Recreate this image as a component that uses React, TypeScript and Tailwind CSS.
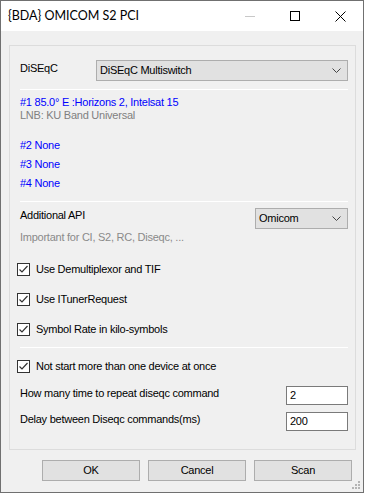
import React from "react";

const font = { fontFamily: '"Liberation Sans", Arial, sans-serif' };
const titleFont = { fontFamily: 'Lato, "Noto Sans", sans-serif' };

function Chevron() {
  return (
    <svg width="9" height="6" viewBox="0 0 9 6" className="shrink-0">
      <polyline points="0.5,0.5 4.5,4.5 8.5,0.5" fill="none" stroke="#444" strokeWidth="1" />
    </svg>
  );
}

function Check({ label }: { label: string }) {
  return (
    <div className="flex items-center h-[16px]">
      <div className="w-[13px] h-[13px] border border-[#333] bg-white flex items-center justify-center">
        <svg width="11" height="11" viewBox="0 0 11 11">
          <polyline points="1.5,5.5 4,8 9.5,2" fill="none" stroke="#333" strokeWidth="1.2" />
        </svg>
      </div>
      <span className="ml-[6px] leading-[16px]">{label}</span>
    </div>
  );
}

function Field({ label, value, top }: { label: string; value: string; top: string }) {
  return (
    <div className={`flex items-start ${top}`}>
      <span className="leading-[16px] flex-1">{label}</span>
      <div className="mt-[1px] w-[62px] h-[19px] border border-[#7a7a7a] bg-white px-[3px] leading-[17px]">
        {value}
      </div>
    </div>
  );
}

export default function App() {
  return (
    <div style={font} className="w-[364px] h-[493px] border border-[#707070] bg-[#f0f0f0] text-[11px] tracking-[-0.25px] text-black relative">
      <div className="h-[30px] bg-white flex items-center">
        <span style={titleFont} className="ml-[7px] text-[12.5px] tracking-normal">{"{BDA} OMICOM S2 PCI"}</span>
        <div className="ml-auto flex items-center">
          <div className="w-[10px] h-[1px] bg-[#c8c8c8] mr-[35px]" />
          <div className="w-[10px] h-[10px] border border-black mr-[35px]" />
          <svg width="11" height="11" viewBox="0 0 11 11" className="mr-[17px]">
            <line x1="0.5" y1="0.5" x2="10.5" y2="10.5" stroke="black" strokeWidth="1" />
            <line x1="10.5" y1="0.5" x2="0.5" y2="10.5" stroke="black" strokeWidth="1" />
          </svg>
        </div>
      </div>

      <div className="ml-[8px] mt-[14px] w-[347px] h-[405px] border border-[#dcdcdc] pl-[10px] pr-[7px]">
        <div className="flex items-start mt-[14px]">
          <span className="leading-[16px] w-[76px]">DiSEqC</span>
          <div className="flex-1 h-[21px] border border-[#adadad] bg-[#e1e1e1] flex items-center pl-[3px] pr-[6px]">
            <span className="flex-1">DiSEqC Multiswitch</span>
            <Chevron />
          </div>
        </div>
        <div className="mt-[8px] border-t border-white" />
        <div className="mt-[6px] leading-[13px] text-[#0000ff]">#1 85.0° E :Horizons 2, Intelsat 15</div>
        <div className="leading-[13px] text-[#808080]">LNB: KU Band Universal</div>
        <div className="mt-[14px] leading-[19px] text-[#0000ff]">
          <div>#2 None</div>
          <div>#3 None</div>
          <div>#4 None</div>
        </div>
        <div className="mt-[8px] border-t border-white" />
        <div className="flex items-start mt-[6px]">
          <div className="flex-1">
            <div className="leading-[14px]">Additional API</div>
            <div className="mt-[8px] leading-[14px] text-[#8a8a8a]">Important for CI, S2, RC, Diseqc, ...</div>
          </div>
          <div className="w-[93px] h-[21px] border border-[#adadad] bg-[#e1e1e1] flex items-center pl-[3px] pr-[6px]">
            <span className="flex-1">Omicom</span>
            <Chevron />
          </div>
        </div>
        <div className="mt-[17px] -ml-[3px] flex flex-col gap-[14px]">
          <Check label="Use Demultiplexor and TIF" />
          <Check label="Use ITunerRequest" />
          <Check label="Symbol Rate in kilo-symbols" />
        </div>
        <div className="mt-[10px] border-t border-white" />
        <div className="mt-[10px] -ml-[3px]">
          <Check label="Not start more than one device at once" />
        </div>
        <Field label="How many time to repeat diseqc command" value="2" top="mt-[11px]" />
        <Field label="Delay between Diseqc commands(ms)" value="200" top="mt-[6px]" />
      </div>

      <div className="mt-[10px] ml-[41px] flex gap-[8px]">
        {["OK", "Cancel", "Scan"].map((b) => (
          <div key={b} className="w-[98px] h-[21px] border border-[#adadad] bg-[#e1e1e1] flex items-center justify-center">
            {b}
          </div>
        ))}
      </div>

      <svg width="10" height="10" viewBox="0 0 10 10" className="absolute right-[2px] bottom-[2px]">
        <rect x="7" y="1" width="2" height="2" fill="#b4b4b4" />
        <rect x="4" y="4" width="2" height="2" fill="#b4b4b4" />
        <rect x="7" y="4" width="2" height="2" fill="#b4b4b4" />
        <rect x="1" y="7" width="2" height="2" fill="#b4b4b4" />
        <rect x="4" y="7" width="2" height="2" fill="#b4b4b4" />
        <rect x="7" y="7" width="2" height="2" fill="#b4b4b4" />
      </svg>
    </div>
  );
}
